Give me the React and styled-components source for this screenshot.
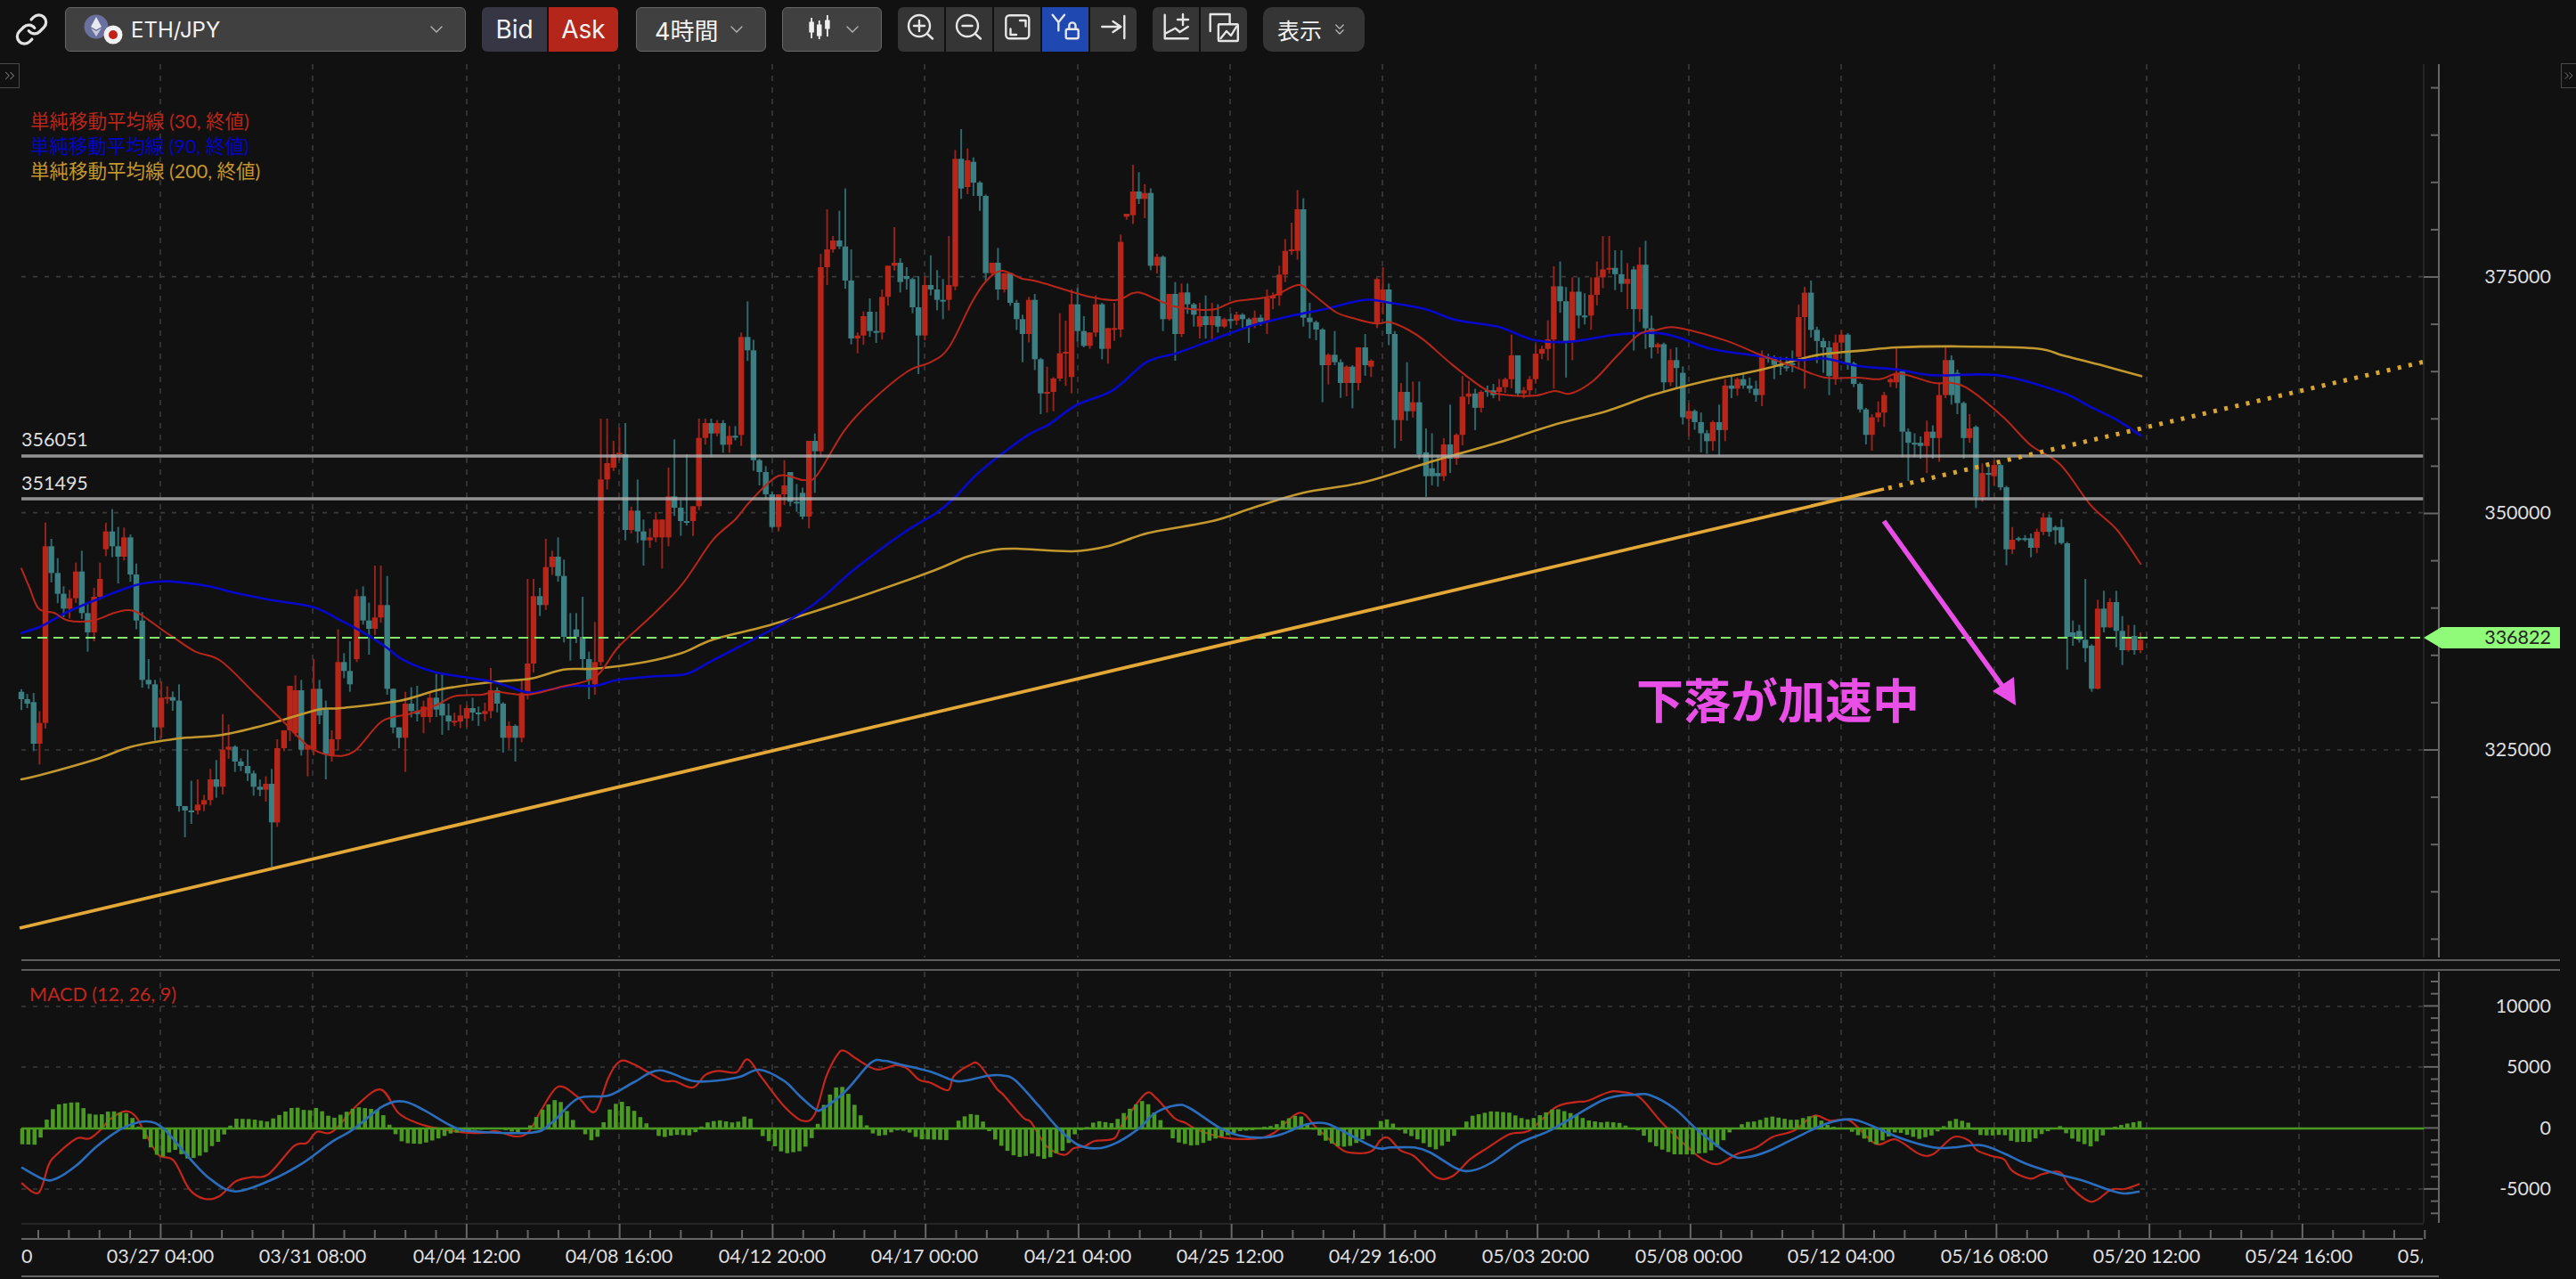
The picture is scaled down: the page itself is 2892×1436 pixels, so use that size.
import { createGlobalStyle } from "styled-components";
import styled from "styled-components";
import { ChevronDown, ChevronsDown, ChevronsRight, Link } from "lucide-react";

const GlobalStyle = createGlobalStyle`
  html, body {
    margin: 0;
    background: #111112;
    overflow: hidden;
  }
`;

const UI_FONT = `Inter, "Noto Sans CJK JP", sans-serif`;
const CHART_FONT = `Lato, "Noto Sans CJK JP", sans-serif`;

const LEFT = 24;
const PLOT_RIGHT = 2721;
const AXIS_X = 2738;
const STEP = 6.87;

// traced from the picture: [x, open, close, high?, low?] in crop coordinates
const crop = (ox, sx, oy, sy, rows) =>
  rows.map(([x, o, c, hi, lo]) => ({
    x: ox + x / sx,
    o: oy + o / sy,
    c: oy + c / sy,
    hi: hi === undefined ? null : oy + hi / sy,
    lo: lo === undefined ? null : oy + lo / sy,
  }));

const CANDLES = [
  ...crop(0, 1.96, 470, 3, [
    [47, 920, 945], [60, 945, 960], [74, 955, 1095], [87, 1095, 1025, 985, 1165], [100, 1025, 430, 350],
    [113, 430, 520, 405], [127, 520, 590, 470], [140, 590, 640], [153, 640, 605], [167, 605, 515, 485],
    [180, 515, 655, 445], [193, 655, 720, 620, 785], [207, 720, 600], [220, 600, 540, 485], [233, 440, 380],
    [247, 380, 430, 305], [260, 430, 465, 365, 555], [273, 465, 400], [287, 400, 525, 390], [300, 525, 680],
    [313, 680, 880], [327, 880, 895, 810, 910], [341, 895, 1040, 880, 1085], [355, 1040, 940, 885], [368, 940, 938],
    [380, 938, 950], [394, 950, 1305, 895], [407, 1305, 1320, 1305, 1410], [421, 1320, 1322, 1220, 1365], [435, 1320, 1300, 1215],
    [449, 1300, 1285], [463, 1285, 1215, 1180], [476, 1215, 1240, 1150], [490, 1240, 1115, 995], [503, 1115, 1105, 1030],
    [517, 1105, 1155, 1100], [530, 1155, 1170], [545, 1170, 1195, 1115], [558, 1195, 1240, 1185, 1270], [572, 1240, 1250],
    [585, 1250, 1230, 1205, 1290], [598, 1230, 1360, 1180, 1510], [610, 1360, 1110, 1080], [625, 1110, 1050, 1050, 1120], [638, 1050, 900, 900],
    [650, 1060, 915, 865], [663, 915, 1115, 880], [677, 1115, 1100, 1100, 1205], [690, 1115, 910, 810], [703, 910, 1000, 880],
    [717, 980, 1130, 950, 1215], [730, 1135, 1080, 1050, 1155], [744, 1080, 820, 710], [757, 820, 850, 790], [770, 850, 895, 750, 920],
    [785, 810, 598, 575, 820], [799, 598, 680, 565], [812, 680, 708, 620, 795], [825, 708, 670, 495], [838, 670, 628, 495],
    [852, 628, 910, 530], [865, 910, 1040, 910, 1060], [878, 1040, 1075, 1040, 1110], [892, 1075, 960, 920, 1190], [905, 960, 985, 905],
    [918, 985, 995, 900, 1020], [932, 1005, 970, 950, 1060], [946, 1005, 940, 920], [960, 940, 980, 860], [973, 960, 1000, 860, 1065],
    [987, 1000, 1020, 960, 1050], [1000, 1020, 1018], [1013, 1020, 1000], [1027, 1010, 975, 965, 1040], [1040, 975, 990],
    [1053, 990, 992, 970, 1035], [1067, 995, 985], [1080, 985, 915, 840], [1094, 915, 960, 905], [1107, 960, 1075, 955, 1125],
    [1120, 1075, 1035, 1020], [1134, 1035, 1075, 1030, 1155], [1148, 1075, 925, 880, 1090], [1161, 925, 825, 540], [1174, 825, 598, 540],
    [1188, 598, 628, 570, 665], [1201, 628, 500, 405], [1215, 500, 465, 445], [1228, 465, 530, 400], [1241, 530, 735, 475],
    [1255, 735, 738, 655, 815], [1268, 710, 735, 655], [1282, 735, 810, 600], [1296, 810, 880, 785, 945], [1309, 895, 820, 685],
    [1322, 820, 205, 0], [1336, 205, 150, 0], [1350, 165, 120, 75], [1363, 120, 115, 30], [1376, 120, 375, 15, 410],
    [1389, 375, 310], [1403, 310, 380, 205], [1416, 380, 410, 340, 495], [1430, 410, 400, 370, 435], [1443, 400, 340, 315],
    [1457, 400, 340, 340, 505], [1471, 400, 262, 165, 430], [1484, 262, 300, 70], [1498, 300, 345, 275, 395], [1511, 345, 348, 120, 360],
    [1525, 345, 295, 295, 395], [1538, 295, 65, 0], [1552, 65, 15, 0], [1565, 15, 50, 0, 130],
  ]),
  ...crop(800, 1.96, 140, 3, [
    [10, 1040, 1005, 995, 1050], [23, 1005, 1078, 995, 1105], [37, 1078, 1048, 1015], [50, 1048, 1050, 1015], [63, 1045, 715, 700],
    [77, 715, 760, 595], [90, 760, 1130], [103, 1130, 1170, 1125, 1215], [117, 1170, 1245, 1150, 1260], [131, 1245, 1355, 1235, 1360],
    [145, 1355, 1245, 1245, 1370], [158, 1245, 1215, 1130], [171, 1170, 1270, 1170, 1285], [185, 1270, 1272, 1210], [198, 1240, 1320],
    [212, 1320, 1065, 1065, 1360], [225, 1065, 1100, 1040, 1240], [238, 1100, 480, 435], [252, 480, 420, 285, 540], [265, 420, 390, 375],
    [279, 390, 410, 290], [292, 410, 525, 215], [305, 525, 720, 420, 740], [319, 720, 710, 700, 770], [332, 710, 645],
    [346, 630, 695, 585, 715], [360, 695, 700, 630, 735], [373, 700, 580, 555], [386, 580, 475, 475], [400, 475, 465, 345],
    [413, 465, 530, 450, 565], [427, 510, 520, 480], [440, 520, 615, 515, 635], [453, 615, 710, 510, 840], [467, 710, 540, 510],
    [480, 540, 555, 440], [494, 555, 590, 490, 625], [507, 590, 592, 520, 655], [520, 590, 540, 375], [534, 545, 115, 85],
    [547, 115, 215, 15, 250], [561, 210, 120, 80], [574, 125, 195, 110, 240], [588, 195, 240, 190, 290], [601, 240, 500, 235, 525],
    [615, 500, 465, 465], [628, 465, 555, 415, 590], [642, 555, 500, 500, 565], [655, 500, 600, 500, 610], [669, 600, 655, 590],
    [682, 655, 705, 640, 800], [696, 705, 590, 580], [709, 590, 790, 570], [722, 790, 905, 785, 975], [736, 905, 900, 815, 970],
    [750, 900, 855, 850, 965], [764, 855, 770, 635], [777, 770, 765, 660, 880], [790, 850, 605, 555, 905], [803, 605, 695, 550],
    [817, 695, 745, 645, 750], [830, 745, 700, 700, 755], [843, 700, 605, 575], [857, 605, 755, 600, 790], [870, 755, 685, 685, 805],
    [884, 690, 685, 600], [898, 690, 395, 370], [911, 310, 300, 300, 320], [925, 305, 225, 135], [938, 225, 250, 160],
    [951, 250, 230, 200, 315], [964, 230, 475], [978, 475, 445, 435], [991, 445, 655, 440, 695], [1005, 655, 570, 570, 660],
    [1018, 570, 705, 530, 795], [1032, 705, 565, 535], [1045, 565, 605, 535], [1059, 605, 640, 600, 680], [1072, 680, 645, 600, 720],
    [1085, 645, 675, 575, 720], [1099, 675, 645, 600, 730], [1112, 645, 680, 605, 700], [1126, 680, 655, 650, 685], [1140, 655, 657, 635],
    [1153, 660, 640, 630, 675], [1166, 640, 655, 635], [1180, 655, 680, 650, 735], [1193, 675, 650], [1206, 650, 665, 640],
    [1220, 665, 585, 555, 705], [1233, 585, 575, 565], [1247, 575, 505, 475, 610], [1260, 505, 425, 385, 530], [1274, 425, 420, 330],
    [1287, 425, 285, 220], [1300, 285, 650, 248, 680], [1314, 650, 665, 600, 720], [1328, 665, 690, 660], [1342, 690, 810, 685, 935],
    [1355, 810, 775, 770, 875], [1369, 775, 800, 695], [1382, 800, 870, 790, 920], [1395, 870, 815, 810, 915], [1408, 815, 870, 810, 955],
    [1421, 870, 750, 750, 895], [1436, 750, 810, 705], [1449, 815, 795, 790],
    [1462, 670, 520, 515, 685], [1475, 600, 555, 480], [1488, 555, 705, 535], [1501, 705, 995, 695, 1090], [1515, 995, 900, 870, 1065],
    [1528, 900, 965, 800], [1541, 965, 935, 865], [1555, 935, 1110, 865],
  ]),
  ...crop(1600, 1.96, 240, 2.8, [
    [2, 750, 825, 675, 890], [15, 800, 825, 690], [28, 815, 825, 760], [41, 825, 725], [55, 725, 770, 600, 815],
    [69, 770, 695, 690], [82, 695, 575, 510], [96, 575, 565, 525], [110, 565, 610, 550, 680], [123, 610, 560, 555, 625],
    [137, 555, 557, 540], [150, 555, 570, 535, 580], [163, 560, 545], [176, 545, 520, 515], [190, 520, 445, 380],
    [204, 445, 565, 445, 575], [217, 565, 555, 545, 580], [230, 555, 520, 510], [243, 520, 440, 410], [257, 440, 425, 415],
    [270, 425, 395, 335], [283, 395, 228, 165, 550], [297, 228, 275, 150], [310, 275, 400, 230, 515], [324, 400, 245, 200, 460],
    [338, 245, 320, 200, 360], [351, 320, 322, 250], [365, 320, 255, 200, 365], [378, 255, 200, 150], [391, 200, 175, 70],
    [405, 175, 170, 70], [418, 170, 190, 115, 240], [432, 190, 220, 115], [445, 220, 205, 155, 300], [459, 175, 300, 165, 430],
    [472, 300, 160, 105, 340], [485, 160, 360, 85, 425], [498, 360, 420, 320, 455], [512, 420, 410, 405, 440], [525, 410, 530, 405, 560],
    [540, 530, 460, 425], [553, 460, 485, 420, 550], [567, 500, 640, 480], [580, 645, 620, 595, 700], [593, 620, 655, 615],
    [607, 655, 690, 625, 750], [620, 690, 715, 680, 755], [633, 715, 655, 650], [647, 655, 680, 600, 760], [660, 680, 540, 520],
    [674, 540, 550, 510, 580], [687, 550, 520, 515], [700, 520, 540, 500, 550], [714, 540, 550, 515], [728, 550, 570, 525],
    [741, 570, 445, 430, 605], [755, 450, 455, 440], [768, 455, 475, 445, 520], [782, 475, 480, 450], [795, 480, 485, 450, 495],
    [808, 470, 475, 430], [822, 450, 325, 285, 490], [835, 325, 248, 230, 550], [849, 248, 365, 210], [862, 365, 400, 355, 470],
    [876, 400, 420, 390, 500], [889, 420, 510, 400, 570], [903, 515, 405, 380], [916, 405, 380, 365], [930, 380, 470, 375, 490],
    [943, 470, 535, 465, 545], [957, 535, 615, 530, 625], [970, 615, 695, 610, 725], [983, 695, 640, 630, 745], [997, 640, 625, 590, 655],
    [1010, 625, 570, 560, 670], [1024, 530, 520, 515, 545], [1037, 530, 500, 420], [1050, 495, 685, 490, 765], [1063, 685, 720, 675, 840],
    [1077, 720, 722, 690, 765], [1090, 720, 730, 700, 770], [1104, 730, 685, 650, 815], [1117, 685, 705, 665, 770], [1131, 705, 570, 530, 780],
    [1145, 570, 460, 420, 580], [1158, 460, 570, 445, 600], [1171, 500, 595, 490, 630], [1185, 595, 705, 590, 770], [1198, 705, 675, 630, 720],
    [1212, 670, 890, 665, 925], [1226, 890, 815, 785, 905], [1240, 815, 817, 790, 890], [1252, 825, 790, 775], [1266, 790, 860, 785],
    [1279, 860, 1055, 855, 1105], [1292, 1055, 1025, 985, 1070], [1306, 1020, 1022, 1015, 1030], [1320, 1020, 1022, 1010, 1030], [1333, 1020, 1050, 1005, 1080],
    [1346, 1050, 1000, 990], [1360, 1000, 955, 940, 1010], [1373, 955, 1000, 945, 1015], [1387, 985, 995, 980, 1040], [1400, 985, 1035, 960, 1040],
  ]),
  ...crop(2300, 2.649, 650, 3, [
    [55, -120, 195, -125, 305], [72, 180, 195, 140, 225], [91, 175, 205, 155, 215], [109, 205, 233, 0, 280], [128, 225, 370, 220, 380],
    [146, 370, 100, 70, 372], [164, 100, 163, 40, 180], [182, 163, 78, 65, 165], [201, 78, 175, 40, 230], [219, 175, 240, 125, 290],
    [237, 240, 195, 155, 245], [255, 192, 240, 155, 255], [273, 240, 205, 180, 250],
  ]),
];

const trace = (ox, sx, oy, sy, pts) =>
  pts.map(([x, y]) => [ox + x / sx, oy + y / sy]);

const MA_RED = [
  ...trace(0, 1.96, 470, 3, [
    [47, 505], [65, 570], [85, 640], [120, 655], [150, 680], [205, 680], [250, 655], [280, 645], [305, 655], [360, 715],
    [380, 735], [430, 785], [485, 815], [560, 925], [620, 1015], [680, 1105], [730, 1135], [780, 1120], [840, 1020], [900, 995],
    [960, 965], [1000, 935], [1060, 930], [1090, 920], [1160, 930], [1230, 905], [1310, 870], [1360, 770], [1430, 670], [1500, 560],
  ]),
  ...trace(800, 1.96, 140, 3, [
    [0, 1400], [50, 1330], [85, 1265], [145, 1183], [200, 1197], [230, 1180], [290, 1030], [350, 930], [430, 830], [480, 800],
    [520, 750], [570, 600], [600, 530], [635, 492], [680, 518], [720, 530], [830, 580], [890, 590], [925, 567], [950, 570],
    [1010, 610], [1060, 622], [1105, 622], [1150, 595], [1230, 578], [1288, 540], [1320, 570], [1370, 630], [1410, 652], [1460, 670],
    [1490, 665], [1530, 690],
  ]),
  ...trace(1600, 1.96, 240, 2.8, [
    [0, 400], [60, 475], [130, 550], [170, 568], [240, 572], [285, 557], [320, 565], [370, 525], [420, 450], [470, 380],
    [510, 365], [555, 358], [660, 398], [740, 445], [810, 480], [880, 515], [950, 515], [1000, 520], [1045, 503], [1120, 532],
    [1160, 532], [1200, 555],
  ]),
  ...trace(2250, 3, 380, 3, [[0, 268], [90, 360], [190, 425], [290, 560], [380, 645], [460, 760]]),
];

const MA_BLUE = [
  ...trace(0, 1.96, 470, 3, [
    [47, 722], [90, 700], [150, 650], [220, 605], [300, 560], [360, 548], [400, 552], [460, 565], [520, 588], [600, 612],
    [690, 635], [750, 680], [810, 730], [850, 770], [890, 815], [960, 855], [1080, 885], [1160, 922], [1200, 915], [1260, 900],
    [1310, 900], [1360, 880], [1440, 868], [1510, 860], [1568, 815],
  ]),
  [903, 686],
  ...trace(800, 1.96, 140, 3, [
    [310, 1500], [420, 1375], [490, 1310], [530, 1260], [580, 1180], [640, 1105], [700, 1040], [740, 1010], [800, 945], [880, 895],
    [955, 800], [1020, 770], [1100, 725], [1180, 680], [1270, 645], [1350, 620], [1435, 590], [1490, 600],
  ]),
  ...trace(1600, 1.96, 240, 2.8, [
    [0, 300], [70, 335], [160, 355], [240, 397], [320, 402], [420, 380], [510, 375], [560, 390], [630, 425], [750, 450],
    [830, 460], [880, 455], [950, 478], [1040, 490], [1120, 508], [1260, 508],
  ]),
  ...trace(2250, 3, 380, 3, [[190, 180], [290, 230], [380, 275], [460, 327]]),
];

const MA_YELLOW = [
  ...trace(0, 1.96, 470, 3, [
    [47, 1215], [90, 1200], [210, 1148], [290, 1105], [390, 1078], [490, 1065], [600, 1025], [700, 980], [750, 975], [880, 950],
    [970, 912], [1080, 888], [1170, 875], [1240, 845], [1310, 842], [1420, 820], [1500, 790], [1568, 745],
  ]),
  [860, 703], [916, 686], [980, 665],
  ...trace(800, 1.96, 140, 3, [
    [490, 1500], [560, 1455], [620, 1432], [670, 1428], [790, 1437], [870, 1420], [960, 1375], [1100, 1335], [1190, 1290], [1300, 1240],
    [1430, 1205],
  ]),
  ...trace(1600, 1.96, 240, 2.8, [
    [0, 785], [60, 760], [160, 720], [280, 665], [400, 620], [500, 570], [620, 525], [740, 490], [860, 445], [960, 430],
    [1040, 420], [1160, 417],
  ]),
  ...trace(2250, 3, 380, 3, [[100, 33], [200, 58], [320, 88], [462, 127]]),
];

const MACD_RED = [
  ...trace(0, 1.742, 1060, 3, [
    [42, 805], [75, 838], [95, 745], [110, 710], [150, 655], [175, 655], [200, 620], [215, 590], [245, 563], [265, 580],
    [285, 640], [310, 710], [340, 730], [370, 825], [400, 858], [430, 848], [460, 800], [490, 785], [525, 775], [575, 680],
    [600, 670], [620, 632], [650, 632], [700, 540], [745, 490], [780, 570], [820, 605], [860, 622], [910, 635], [950, 635],
    [970, 630], [1010, 648], [1035, 630], [1060, 555], [1092, 480], [1130, 515], [1163, 565], [1190, 450], [1212, 395], [1240, 405],
    [1295, 458], [1320, 462], [1355, 483], [1380, 440], [1405, 427], [1440, 432], [1462, 388], [1490, 450],
  ]),
  ...trace(880, 2.306, 1170, 3, [
    [0, 215], [48, 265], [80, 243], [110, 115], [140, 40], [158, 30], [190, 58], [240, 92], [290, 78], [320, 90],
    [350, 127], [380, 137], [425, 162], [440, 115], [480, 78], [505, 75], [550, 155], [570, 180], [620, 255], [640, 270],
    [680, 350], [725, 380], [750, 358], [780, 350], [805, 333], [855, 325], [875, 280], [935, 175], [965, 190], [1010, 255],
    [1040, 272], [1070, 295], [1140, 322], [1220, 325], [1270, 305], [1335, 238], [1380, 290], [1440, 358], [1470, 373], [1520, 368],
  ]),
  ...trace(1550, 2.24, 1170, 3, [
    [0, 330], [20, 323], [50, 365], [85, 385], [140, 455], [180, 452], [225, 395], [270, 355], [325, 310], [375, 297],
    [440, 220], [490, 202], [520, 198], [570, 170], [600, 167], [650, 185], [710, 275], [790, 375], [820, 402], [850, 410],
    [900, 375], [945, 355], [985, 320], [1040, 298], [1090, 248], [1130, 265], [1180, 265], [1245, 343], [1295, 328], [1355, 377],
    [1390, 377], [1440, 320], [1480, 332], [1500, 365], [1540, 385],
  ]),
  ...trace(2200, 2.266, 1060, 3, [
    [113, 725], [135, 765], [180, 790], [210, 775], [255, 768], [280, 815], [335, 868], [385, 827], [420, 825], [458, 808],
  ]),
];

const MACD_BLUE = [
  ...trace(0, 1.742, 1060, 3, [
    [42, 752], [85, 792], [110, 790], [150, 745], [190, 680], [240, 620], [285, 597], [320, 622], [370, 720], [410, 790],
    [460, 833], [530, 795], [590, 740], [650, 665], [690, 625], [750, 545], [790, 530], [830, 560], [880, 610], [920, 630],
    [1040, 635], [1080, 600], [1130, 520], [1190, 510], [1240, 465], [1290, 425], [1360, 462], [1440, 450], [1485, 423],
  ]),
  ...trace(880, 2.306, 1170, 3, [
    [0, 130], [40, 180], [80, 225], [100, 225], [160, 165], [225, 70], [260, 63], [300, 75], [380, 100], [440, 130],
    [470, 130], [530, 113], [570, 113], [600, 130], [660, 215], [710, 290], [760, 345], [810, 358], [860, 340], [920, 290],
    [960, 240], [1015, 213], [1050, 222], [1130, 290], [1180, 315], [1240, 322], [1290, 310], [1350, 278], [1400, 273], [1440, 295],
    [1530, 355],
  ]),
  ...trace(1550, 2.24, 1170, 3, [
    [25, 355], [85, 355], [125, 372], [190, 425], [230, 433], [280, 405], [350, 340], [430, 295], [560, 195], [640, 177],
    [680, 180], [740, 225], [800, 300], [880, 380], [920, 388], [970, 370], [1040, 325], [1120, 275], [1185, 260], [1240, 285],
    [1310, 325], [1390, 355], [1440, 355], [1510, 347],
  ]),
  ...trace(2200, 2.266, 1060, 3, [
    [113, 705], [170, 740], [250, 775], [310, 795], [380, 828], [420, 840], [458, 833],
  ]),
];

// wick length when the trace has none
let seed = 7;
const rnd = () => {
  seed = (seed * 16807) % 2147483647;
  return seed / 2147483647;
};

const candleData = CANDLES.map((c) => {
  const top = Math.min(c.o, c.c);
  const bottom = Math.max(c.o, c.c);
  return {
    ...c,
    up: c.c < c.o,
    top,
    bottom: Math.max(bottom, top + 2),
    hi: c.hi ?? top - 3 - rnd() * 10,
    lo: c.lo ?? bottom + 3 + rnd() * 10,
  };
});

const smooth = (pts) => {
  let d = `M${pts[0][0].toFixed(1)} ${pts[0][1].toFixed(1)}`;
  for (let i = 0; i < pts.length - 1; i++) {
    const p0 = pts[i - 1] || pts[i];
    const p1 = pts[i];
    const p2 = pts[i + 1];
    const p3 = pts[i + 2] || p2;
    const c1x = p1[0] + (p2[0] - p0[0]) / 6;
    const c1y = p1[1] + (p2[1] - p0[1]) / 6;
    const c2x = p2[0] - (p3[0] - p1[0]) / 6;
    const c2y = p2[1] - (p3[1] - p1[1]) / 6;
    d += `C${c1x.toFixed(1)} ${c1y.toFixed(1)} ${c2x.toFixed(1)} ${c2y.toFixed(1)} ${p2[0].toFixed(1)} ${p2[1].toFixed(1)}`;
  }
  return d;
};

const sample = (pts, x) => {
  for (let i = 0; i < pts.length - 1; i++) {
    if (x >= pts[i][0] && x <= pts[i + 1][0]) {
      const t = (x - pts[i][0]) / (pts[i + 1][0] - pts[i][0] || 1);
      return pts[i][1] + t * (pts[i + 1][1] - pts[i][1]);
    }
  }
  return x < pts[0][0] ? pts[0][1] : pts[pts.length - 1][1];
};

const ZERO_Y = 1267;
const HIST_BARS = [];
for (let x = LEFT + 1; x < 2406; x += STEP) {
  HIST_BARS.push({ x, h: sample(MACD_BLUE, x) - sample(MACD_RED, x) });
}

const GRID_X = [180, 351, 524, 695, 867, 1038, 1210, 1381, 1552, 1724, 1896, 2067, 2239, 2410, 2581];
const TIME_LABELS = [
  "03/27 04:00", "03/31 08:00", "04/04 12:00", "04/08 16:00", "04/12 20:00", "04/17 00:00", "04/21 04:00", "04/25 12:00",
  "04/29 16:00", "05/03 20:00", "05/08 00:00", "05/12 04:00", "05/16 08:00", "05/20 12:00", "05/24 16:00", "05/28 20:00",
];
const PRICE_GRID = [
  { y: 310.6, label: "375000" },
  { y: 575.6, label: "350000" },
  { y: 842, label: "325000" },
];
const MACD_GRID = [
  { y: 1130, label: "10000" },
  { y: 1198, label: "5000" },
  { y: 1335, label: "-5000" },
];

const range = (from, to) => {
  const out = [];
  for (let v = from; v <= to; v++) out.push(v);
  return out;
};

const Page = styled.div`
  width: 2892px;
  height: 1436px;
  display: flex;
  flex-direction: column;
  background: #111112;
  overflow: hidden;
`;

const Toolbar = styled.div`
  height: 66px;
  flex: none;
  box-sizing: border-box;
  padding: 8px 0 0 16px;
  display: flex;
  align-items: flex-start;
  gap: 18px;
  font-family: ${UI_FONT};
  color: #f2f2f2;
`;

const LinkSlot = styled.div`
  width: 39px;
  height: 50px;
  display: flex;
  align-items: center;
  justify-content: center;
  color: #e2e2e2;
`;

const Dropdown = styled.div`
  width: ${(props) => props.$width}px;
  height: 50px;
  box-sizing: border-box;
  display: flex;
  align-items: center;
  padding: 0 ${(props) => props.$padRight}px 0 ${(props) => props.$padLeft}px;
  background: #404040;
  border: 1.5px solid #666;
  border-radius: 6px;
  font-size: ${(props) => props.$size || 24}px;
`;

const DropdownLabel = styled.span`
  flex: 1;
  white-space: nowrap;
`;

const Caret = styled(ChevronDown)`
  color: #b5b5b5;
  flex: none;
`;

const PairIcon = styled.svg`
  width: 44px;
  height: 34px;
  margin-right: 9px;
  flex: none;
`;

const CandleIcon = styled.svg`
  width: 34px;
  height: 34px;
  flex: 1;
  display: block;
`;

const Segment = styled.div`
  display: flex;
  gap: 2px;
  margin-right: 2px;
`;

const SideButton = styled.div`
  width: ${(props) => props.$width}px;
  height: 50px;
  display: flex;
  align-items: center;
  justify-content: center;
  font-size: 28px;
  background: ${(props) => props.$bg};
  border-radius: ${(props) => props.$radius};
`;

const IconGroup = styled.div`
  display: flex;
  gap: 2px;
`;

const IconButton = styled.div`
  width: 52px;
  height: 50px;
  background: ${(props) => (props.$active ? "#1f49b0" : "#353535")};
  &:first-child {
    border-radius: 6px 0 0 6px;
  }
  &:last-child {
    border-radius: 0 6px 6px 0;
  }
`;

const IconGlyph = styled.svg`
  display: block;
  width: 52px;
  height: 50px;
  fill: none;
  stroke: #e6e6e6;
  stroke-width: 2.4;
  stroke-linecap: round;
  stroke-linejoin: round;
`;

const ViewButton = styled.div`
  width: 114px;
  height: 50px;
  box-sizing: border-box;
  padding-left: 16px;
  display: flex;
  align-items: center;
  gap: 10px;
  background: #353535;
  border-radius: 10px;
  font-size: 25px;
`;

const ViewCaret = styled(ChevronsDown)`
  color: #b5b5b5;
`;

const ChartArea = styled.div`
  flex: 1;
  position: relative;
`;

const ChartSvg = styled.svg`
  display: block;
  width: 2892px;
  height: 1370px;
`;

const ChartText = styled.text`
  font-family: ${CHART_FONT};
  font-size: 21.5px;
  fill: ${(props) => props.$color || "#dedede"};
  dominant-baseline: central;
`;

const Legend = styled.div`
  position: absolute;
  left: 34px;
  top: 56px;
  display: flex;
  flex-direction: column;
  font-family: ${CHART_FONT};
  font-size: 21.5px;
  line-height: 28px;
`;

const LegendRow = styled.div`
  color: ${(props) => props.$color};
  white-space: nowrap;
`;

const Collapse = styled.div`
  position: absolute;
  top: 5px;
  width: 22px;
  height: 28px;
  box-sizing: border-box;
  display: flex;
  align-items: center;
  justify-content: center;
  border: 1.5px solid #4a4a4a;
  color: #7d7d7d;
  ${(props) => (props.$side === "left" ? "left: 0; border-left: 0;" : "right: 0; border-right: 0; width: 17px;")}
`;

const CalloutText = styled.div`
  position: absolute;
  left: 1837px;
  top: 684px;
  font-family: "Noto Sans CJK JP", sans-serif;
  font-size: 53px;
  font-weight: 700;
  line-height: 68px;
  color: #e94fe6;
  white-space: nowrap;
`;

const PriceTag = styled.polygon`
  fill: #90fb79;
`;

const Chart = () => (
  <ChartSvg viewBox="0 66 2892 1370">
    <defs>
      <clipPath id="time-clip">
        <rect x={LEFT} y={1392} width={PLOT_RIGHT - LEFT - 1} height={40} />
      </clipPath>
    </defs>

    {/* grid */}
    <g stroke="#3b3b3b" strokeWidth="1.6" strokeDasharray="6 7">
      {GRID_X.map((x) => (
        <line key={x} x1={x} x2={x} y1={72} y2={1075} />
      ))}
      {GRID_X.map((x) => (
        <line key={x} x1={x} x2={x} y1={1091} y2={1374} />
      ))}
    </g>
    <g stroke="#3b3b3b" strokeWidth="1.6" strokeDasharray="5 8">
      {[...PRICE_GRID, ...MACD_GRID].map((g) => (
        <line key={g.y} x1={LEFT} x2={PLOT_RIGHT} y1={g.y} y2={g.y} />
      ))}
    </g>

    {/* candles */}
    <g>
      {candleData.map((c, i) => (
        <g key={i}>
          <line
            x1={c.x}
            x2={c.x}
            y1={c.hi}
            y2={c.lo}
            stroke={c.up ? "#94231a" : "#2f686c"}
            strokeWidth="2"
          />
          <rect
            x={c.x - 3.2}
            y={c.top}
            width={6.4}
            height={c.bottom - c.top}
            fill={c.up ? "#b8261a" : "#3b7f83"}
          />
        </g>
      ))}
    </g>

    {/* moving averages */}
    <g fill="none" strokeLinejoin="round" strokeLinecap="round">
      <path d={smooth(MA_YELLOW)} stroke="#c2982e" strokeWidth="2.6" />
      <path d={smooth(MA_BLUE)} stroke="#0808cc" strokeWidth="2.6" />
      <path d={smooth(MA_RED)} stroke="#b8261a" strokeWidth="2" />
    </g>

    {/* horizontal levels */}
    <g stroke="#b6b6b6" strokeWidth="3.6" opacity="0.78">
      <line x1={LEFT} x2={PLOT_RIGHT} y1={512} y2={512} />
      <line x1={LEFT} x2={PLOT_RIGHT} y1={560} y2={560} />
    </g>
    <ChartText x={LEFT} y={493}>356051</ChartText>
    <ChartText x={LEFT} y={542}>351495</ChartText>

    {/* current price */}
    <line x1={LEFT} x2={PLOT_RIGHT} y1={716} y2={716} stroke="#86ea6c" strokeWidth="2" strokeDasharray="11 7" />

    {/* trend line */}
    <line x1={22} y1={1042} x2={2115} y2={549} stroke="#e3a837" strokeWidth="3.8" />
    <line
      x1={2120}
      y1={548}
      x2={2722}
      y2={406}
      stroke="#d9a630"
      strokeWidth="5"
      strokeDasharray="4 8.5"
    />

    {/* arrow */}
    <line x1={2115} y1={585} x2={2252} y2={776} stroke="#e94fe6" strokeWidth="5.5" />
    <polygon points="2261,760 2237,776 2263,792" fill="#e94fe6" />

    {/* panel separators */}
    <g stroke="#5c5c5c" strokeWidth="2">
      <line x1={LEFT} x2={2874} y1={1078} y2={1078} />
      <line x1={LEFT} x2={2874} y1={1089} y2={1089} />
    </g>

    {/* price axis */}
    <g stroke="#2c2c2c" strokeWidth="1.5">
      <line x1={PLOT_RIGHT} x2={PLOT_RIGHT} y1={72} y2={1075} />
      <line x1={PLOT_RIGHT} x2={PLOT_RIGHT} y1={1091} y2={1373} />
      <line x1={LEFT} x2={PLOT_RIGHT} y1={1374} y2={1374} />
    </g>
    <g stroke="#666" strokeWidth="2">
      <line x1={AXIS_X} x2={AXIS_X} y1={72} y2={1075} />
      <line x1={AXIS_X} x2={AXIS_X} y1={1091} y2={1373} />
      {range(-4, 14).map((k) => {
        const y = 842 - k * 53.1;
        return <line key={k} x1={k % 5 === 0 ? PLOT_RIGHT : 2729} x2={AXIS_X} y1={y} y2={y} />;
      })}
      {range(0, 19).map((k) => {
        const y = 1102 + k * 13.7;
        return <line key={k} x1={k % 5 === 2 ? PLOT_RIGHT : 2729} x2={AXIS_X} y1={y} y2={y} />;
      })}
    </g>
    {PRICE_GRID.map((g) => (
      <ChartText key={g.y} x={2864} y={g.y - 1} textAnchor="end">
        {g.label}
      </ChartText>
    ))}
    <PriceTag points="2721,716 2741,704 2874,704 2874,728 2741,728" />
    <ChartText x={2864} y={715} textAnchor="end" $color="#242424">
      336822
    </ChartText>

    {/* macd */}
    <ChartText x={33} y={1116} $color="#c0261b">
      MACD (12, 26, 9)
    </ChartText>
    <path d={smooth(MACD_RED)} fill="none" stroke="#c4261b" strokeWidth="2.2" />
    <line x1={LEFT} x2={PLOT_RIGHT} y1={ZERO_Y} y2={ZERO_Y} stroke="#4a9a22" strokeWidth="2.6" />
    <g fill="#4a9a22">
      {HIST_BARS.map((b) => (
        <rect
          key={b.x}
          x={b.x - 2.3}
          y={b.h > 0 ? ZERO_Y - b.h : ZERO_Y}
          width={4.6}
          height={Math.abs(b.h)}
        />
      ))}
    </g>
    <path d={smooth(MACD_BLUE)} fill="none" stroke="#2a6dbd" strokeWidth="2.6" />
    {[...MACD_GRID, { y: 1267, label: "0" }].map((g) => (
      <ChartText key={g.y} x={2864} y={g.y - 1} textAnchor="end">
        {g.label}
      </ChartText>
    ))}

    {/* time axis */}
    <g stroke="#666" strokeWidth="2">
      <line x1={LEFT} x2={2720} y1={1391} y2={1391} />
      <line x1={LEFT} x2={AXIS_X} y1={1433} y2={1433} />
      {range(0, 78).map((k) => {
        const x = 43 + k * 34.35;
        return <line key={k} x1={x} x2={x} y1={(k + 1) % 5 === 0 ? 1374 : 1381} y2={1391} />;
      })}
    </g>
    <g clipPath="url(#time-clip)">
      <ChartText x={24} y={1410}>0</ChartText>
      {TIME_LABELS.map((t, i) => (
        <ChartText key={t} x={i < 15 ? GRID_X[i] : 2752} y={1410} textAnchor="middle">
          {t}
        </ChartText>
      ))}
    </g>
  </ChartSvg>
);

export default function App() {
  return (
    <Page>
      <GlobalStyle />
      <Toolbar>
        <LinkSlot>
          <Link size={42} strokeWidth={2} />
        </LinkSlot>
        <Dropdown $width={450} $padLeft={20} $padRight={20}>
          <PairIcon viewBox="0 0 44 34">
            <circle cx="14" cy="14" r="13.5" fill="#6b719f" />
            <path d="M14 3l6 11-6 3.5L8 14z" fill="#e8e8f0" />
            <path d="M14 19l6-3.6L14 25l-6-9.6z" fill="#c8cadb" />
            <circle cx="33" cy="23" r="10.5" fill="#f2f2f2" />
            <circle cx="33" cy="23" r="5" fill="#c22018" />
          </PairIcon>
          <DropdownLabel>ETH/JPY</DropdownLabel>
          <Caret size={24} strokeWidth={1.4} />
        </Dropdown>
        <Segment>
          <SideButton $width={73} $bg="#363644" $radius="6px 0 0 6px">Bid</SideButton>
          <SideButton $width={78} $bg="#b5261a" $radius="0 6px 6px 0">Ask</SideButton>
        </Segment>
        <Dropdown $width={146} $padLeft={20} $padRight={20} $size={27}>
          <DropdownLabel>4時間</DropdownLabel>
          <Caret size={24} strokeWidth={1.4} />
        </Dropdown>
        <Dropdown $width={112} $padLeft={21} $padRight={20}>
          <CandleIcon viewBox="0 0 34 34" fill="#f0f0f0" stroke="#f0f0f0">
            <path d="M5.6 4v23M14.3 7v21M23.4 1v24" strokeWidth="1.8" fill="none" />
            <rect x="3.4" y="9" width="4.4" height="11" />
            <rect x="12.1" y="12" width="4.4" height="12" />
            <rect x="21.2" y="7" width="4.4" height="9" />
          </CandleIcon>
          <Caret size={24} strokeWidth={1.4} />
        </Dropdown>
        <IconGroup>
          <IconButton>
            <IconGlyph viewBox="0 0 52 50">
              <circle cx="24" cy="21" r="12" />
              <path d="M33 30l6 5.5M18 21h12M24 15v12" />
            </IconGlyph>
          </IconButton>
          <IconButton>
            <IconGlyph viewBox="0 0 52 50">
              <circle cx="24" cy="21" r="12" />
              <path d="M33 30l6 5.5M18.5 21h11" />
            </IconGlyph>
          </IconButton>
          <IconButton>
            <IconGlyph viewBox="0 0 52 50">
              <rect x="13.3" y="9.3" width="26" height="26" rx="4" />
              <path d="M29 15h6.5v6.5M18.5 24.5V31H25" />
            </IconGlyph>
          </IconButton>
          <IconButton $active>
            <IconGlyph viewBox="0 0 52 50">
              <path d="M11.7 8.7l6.6 8.3 6.7-8.3M18.3 17v9.3" />
              <rect x="26.7" y="24.7" width="14" height="10.6" rx="2" />
              <path d="M30.3 24.7V21a3.6 3.6 0 0 1 7.2 0v3.7" />
            </IconGlyph>
          </IconButton>
          <IconButton>
            <IconGlyph viewBox="0 0 52 50">
              <path d="M13.3 22h21M25.5 16l8.8 6-8.8 6M38.3 10v25" />
            </IconGlyph>
          </IconButton>
        </IconGroup>
        <IconGroup>
          <IconButton>
            <IconGlyph viewBox="0 0 52 50">
              <path d="M13.7 8.7v26.6h26M13.7 30l11.7-6.3 5.1 4.3 9.2-6M34 8v12M28 14h12" />
            </IconGlyph>
          </IconButton>
          <IconButton>
            <IconGlyph viewBox="0 0 52 50">
              <path d="M32.6 8H10.7v19M32.6 8v10" />
              <rect x="19.9" y="19.3" width="21.9" height="18.7" rx="1" />
              <path d="M22.5 35l6.5-8 5 5 6-10" />
            </IconGlyph>
          </IconButton>
        </IconGroup>
        <ViewButton>
          表示
          <ViewCaret size={20} strokeWidth={1.6} />
        </ViewButton>
      </Toolbar>
      <ChartArea>
        <Chart />
        <Legend>
          <LegendRow $color="#b8261a">単純移動平均線 (30, 終値)</LegendRow>
          <LegendRow $color="#0404c4">単純移動平均線 (90, 終値)</LegendRow>
          <LegendRow $color="#c4962c">単純移動平均線 (200, 終値)</LegendRow>
        </Legend>
        <CalloutText>下落が加速中</CalloutText>
        <Collapse $side="left">
          <ChevronsRight size={18} strokeWidth={1.4} />
        </Collapse>
        <Collapse $side="right">
          <ChevronsRight size={16} strokeWidth={1.4} />
        </Collapse>
      </ChartArea>
    </Page>
  );
}
